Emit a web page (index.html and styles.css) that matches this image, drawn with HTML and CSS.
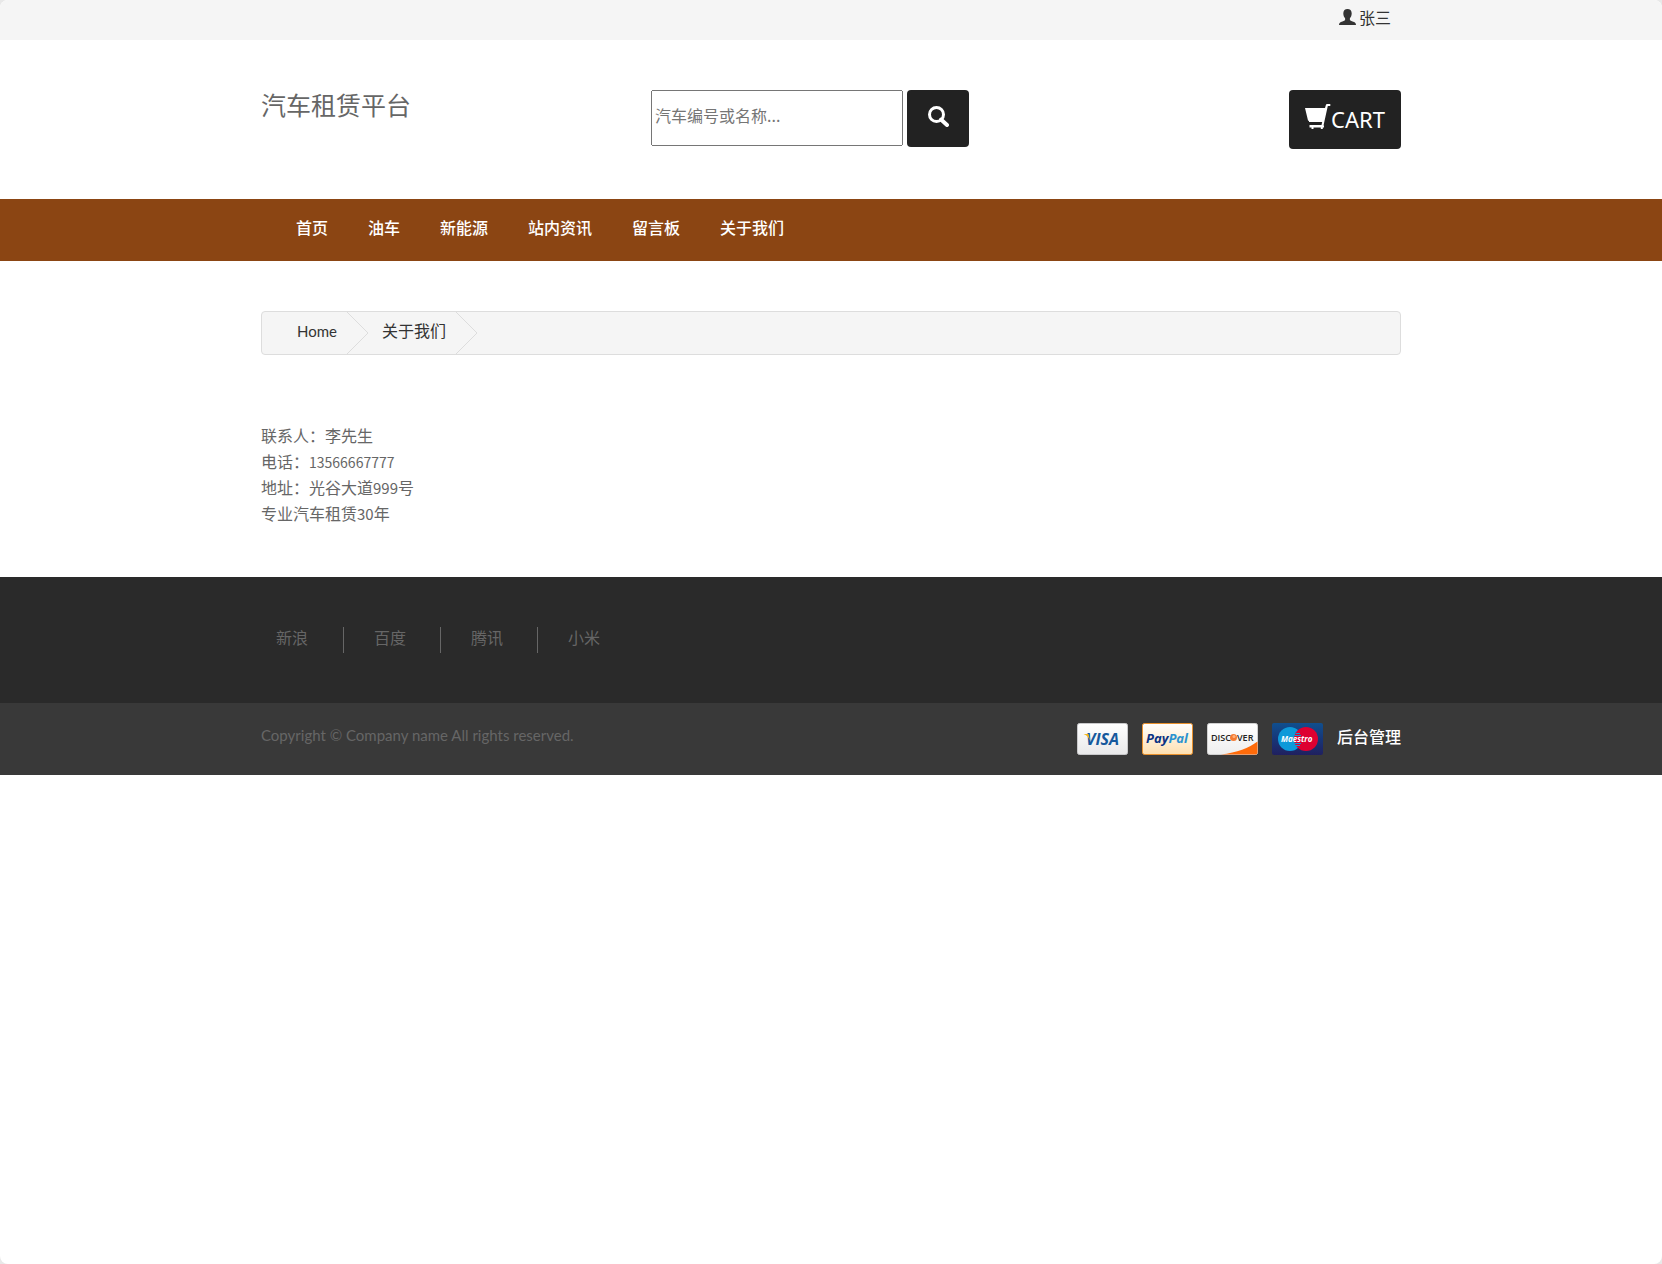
FILE: index.html
```html
<!DOCTYPE html>
<html lang="zh-CN">
<head>
<meta charset="utf-8">
<meta name="viewport" content="width=device-width, initial-scale=1">
<title>汽车租赁平台</title>
<link rel="stylesheet" href="styles.css">
</head>
<body>
<div class="topbar">
  <div class="container topbar-inner">
    <a class="user" href="#">
      <svg class="user-icon" viewBox="0 0 17 16" aria-hidden="true"><path d="M8.500 0C11 0 12.700 1.600 12.700 4.200C12.700 6.600 12 8 10.900 9.200V10.900C11.300 11.600 13 12 15 12.900C16.400 13.500 17 14.300 17 16H0C0 14.300.6 13.500 2 12.900C4 12 5.700 11.600 6.100 10.900V9.200C5 8 4.300 6.600 4.300 4.200C4.300 1.600 6 0 8.500 0Z"/></svg>
      <span>张三</span>
    </a>
  </div>
</div>

<header class="container header">
  <div class="brand">汽车租赁平台</div>
  <form class="search">
    <input class="search-input" type="text" placeholder="汽车编号或名称..." aria-label="汽车编号或名称">
    <button class="search-button" type="button" aria-label="搜索">
      <svg class="search-icon" viewBox="0 0 21 21" aria-hidden="true"><circle cx="8.500" cy="8.500" r="7" fill="none" stroke="#fff" stroke-width="3"/><path d="M13 13.500L19 19" stroke="#fff" stroke-width="4" stroke-linecap="round"/></svg>
    </button>
  </form>
  <div class="cart">
    <button class="cart-button" type="button">
      <svg class="cart-icon" viewBox="0 0 26 26" aria-hidden="true"><path fill="#fff" d="M0 4H20L20.800 1.200C21.100.4 21.500 0 22.300 0H25.300V2H22.800L18.500 21.500H19V23.500H17.800V25H15.800V23.500H8.500V25H6.500V23.500H4.500V21H16.500L17.200 18H4V17L3 16.500Z"/></svg>
      <span>CART</span>
    </button>
  </div>
</header>

<nav class="nav">
  <div class="container nav-list">
    <a href="#">首页</a>
    <a href="#">油车</a>
    <a href="#">新能源</a>
    <a href="#">站内资讯</a>
    <a href="#">留言板</a>
    <a href="#">关于我们</a>
  </div>
</nav>

<main class="container main">
  <ol class="breadcrumb">
    <li><a class="latin" href="#">Home</a><svg class="chevron" viewBox="0 0 23 42" aria-hidden="true"><path d="M0.500 -0.500L22 21L0.500 42.500"/></svg></li>
    <li><a href="#">关于我们</a><svg class="chevron" viewBox="0 0 23 42" aria-hidden="true"><path d="M0.500 -0.500L22 21L0.500 42.500"/></svg></li>
  </ol>
  <div class="about">
    <p>联系人：李先生</p>
    <p>电话：<span class="phone">13566667777</span></p>
    <p>地址：光谷大道<span class="number">999</span>号</p>
    <p>专业汽车租赁<span class="number">30</span>年</p>
  </div>
</main>

<footer>
  <div class="links">
    <ul class="container link-list">
      <li><a href="#">新浪</a></li>
      <li><a href="#">百度</a></li>
      <li><a href="#">腾讯</a></li>
      <li><a href="#">小米</a></li>
    </ul>
  </div>
  <div class="legal">
    <div class="container legal-inner">
      <p class="copyright latin">Copyright © Company name All rights reserved.</p>
      <div class="payments">
        <svg class="card" viewBox="0 0 51 32" role="img" aria-label="Visa">
          <defs><linearGradient id="visa-bg" x2="0" y2="1"><stop stop-color="#fff"/><stop offset="1" stop-color="#e9e9ea"/></linearGradient></defs>
          <rect x=".5" y=".5" width="50" height="31" rx="2" fill="url(#visa-bg)" stroke="#c9c9cb"/>
          <text class="logo" x="9" y="22" font-size="16" fill="#15599d">VISA</text>
          <path fill="#f5b81c" d="M6.500 11H11.500L13 17.500C11.500 14 9.500 12 6.500 11Z"/>
        </svg>
        <svg class="card" viewBox="0 0 51 32" role="img" aria-label="PayPal">
          <defs><linearGradient id="paypal-bg" x2="0" y2="1"><stop stop-color="#fff"/><stop offset="1" stop-color="#fee0b0"/></linearGradient></defs>
          <rect x=".5" y=".5" width="50" height="31" rx="2" fill="url(#paypal-bg)" stroke="#e9912d"/>
          <text class="logo" x="4" y="20" font-size="13" fill="#0b3384">Pay<tspan fill="#2a92d0">Pal</tspan></text>
        </svg>
        <svg class="card" viewBox="0 0 51 32" role="img" aria-label="Discover">
          <defs><linearGradient id="discover-bg" x2="0" y2="1"><stop stop-color="#fff"/><stop offset="1" stop-color="#eee"/></linearGradient></defs>
          <rect x=".5" y=".5" width="50" height="31" rx="2" fill="url(#discover-bg)" stroke="#d0d0d0"/>
          <path fill="#ff6b0a" d="M14 31.500C30 29.500 42 25 50.500 18.500V29.500Q50.500 31.500 48.500 31.500Z"/>
          <text class="logo-plain" x="4" y="18" font-size="9" fill="#222">DISC</text>
          <text class="logo-plain" x="30" y="18" font-size="9" fill="#222">VER</text>
          <circle cx="26.500" cy="14.500" r="3.500" fill="#f47b32"/><circle cx="27" cy="13.500" r="1.500" fill="#ffb27d"/>
        </svg>
        <svg class="card" viewBox="0 0 51 32" role="img" aria-label="Maestro">
          <defs><linearGradient id="maestro-bg" x2="0" y2="1"><stop stop-color="#104f8e"/><stop offset=".5" stop-color="#173678"/><stop offset="1" stop-color="#20205f"/></linearGradient></defs>
          <rect width="51" height="32" rx="2" fill="url(#maestro-bg)"/>
          <circle cx="18" cy="16" r="12" fill="#0d99d9"/><circle cx="34" cy="16" r="12" fill="#dd0031"/>
          <path stroke="#0d99d9" d="M23.500 10.500H28M22.500 12.500H29M22.500 20.500H29M23.500 22.500H28"/>
          <text class="logo" x="9" y="19" font-size="8" fill="#fff">Maestro</text>
        </svg>
        <a class="admin" href="#">后台管理</a>
      </div>
    </div>
  </div>
</footer>
</body>
</html>
```
FILE: styles.css
```css
* { box-sizing: border-box; }

html { background: #e8e8e8; }

body {
  margin: 0;
  min-height: 100vh;
  overflow: hidden;
  border-radius: 8px;
  background: #fff;
  color: #666;
  font: 16px/26px "Noto Sans CJK SC", sans-serif;
}

a { color: inherit; text-decoration: none; }
p, ul, ol { margin: 0; padding: 0; list-style: none; }
svg { display: block; flex: none; }
button, input { font: inherit; }

.container {
  width: 100%;
  max-width: 1170px;
  margin: 0 auto;
  padding: 0 15px;
}
.latin { font-family: Lato, "Noto Sans CJK SC", sans-serif; font-size: 15px; }
.phone { font-size: 14px; line-height: 1; }
.number { font-size: 15px; line-height: 1; }

.topbar { background: #f5f5f5; color: #333; }
.topbar-inner { display: flex; justify-content: flex-end; padding: 4px 25px 10px; }
.user { display: flex; align-items: center; gap: 3px; }
.user-icon { width: 17px; height: 16px; fill: #333; }

.header {
  display: grid;
  grid-template-columns: repeat(3, 1fr);
  gap: 30px;
  align-items: start;
  padding-top: 50px;
  padding-bottom: 50px;
}
.brand { font-size: 25px; line-height: 28px; }
.search { display: flex; align-items: flex-start; gap: 4px; }
.search-input {
  width: 252px;
  height: 56px;
  padding: 0 2px 6px;
}
.search-input::placeholder { color: #757575; }
.search-button {
  display: flex;
  justify-content: center;
  width: 62px;
  height: 57px;
  padding: 16px 0;
  border: 0;
  border-radius: 4px;
  background: #222;
}
.search-icon { width: 21px; height: 21px; }
.cart { display: flex; justify-content: flex-end; }
.cart-button {
  display: flex;
  padding: 14px 16px;
  border: 0;
  border-radius: 4px;
  background: #222;
  color: #fff;
  font-family: "Noto Sans", sans-serif;
  font-size: 22px;
  line-height: 31px;
}
.cart-icon { width: 26px; height: 26px; }

.nav { background: #8b4513; color: #fff; font-weight: 500; }
.nav-list { display: flex; padding: 15px 30px 21px; }
.nav-list a { padding: 0 20px; }

.main { padding-top: 50px; padding-bottom: 51px; }
.breadcrumb {
  display: flex;
  gap: 13px;
  padding-left: 35px;
  border: 1px solid #ddd;
  border-radius: 4px;
  background: #f5f5f5;
  color: #333;
}
.breadcrumb li { display: flex; align-items: center; gap: 9px; }
.breadcrumb a { padding-bottom: 6px; }
.breadcrumb .latin { padding-bottom: 4px; }
.chevron { width: 23px; height: 42px; fill: none; stroke: #ddd; }
.about { padding-top: 67px; }

.links { padding: 50px 0; background: #2a2a2a; }
.link-list { display: flex; line-height: 20px; }
.link-list li { padding: 0 34px 6px 30px; border-left: 1px solid #666; }
.link-list li:first-child { padding: 0 35px 6px 15px; border-left: 0; }

.legal { padding: 20px 0; background: #393939; }
.legal-inner { display: flex; justify-content: space-between; }
.copyright { line-height: 24px; }
.payments { display: flex; gap: 14px; }
.card { width: 51px; height: 32px; }
.admin { color: #fff; font-weight: 500; }
.logo { font-family: "Open Sans", sans-serif; font-style: italic; font-weight: 700; }
.logo-plain { font-family: "Open Sans", sans-serif; font-weight: 600; }
```
